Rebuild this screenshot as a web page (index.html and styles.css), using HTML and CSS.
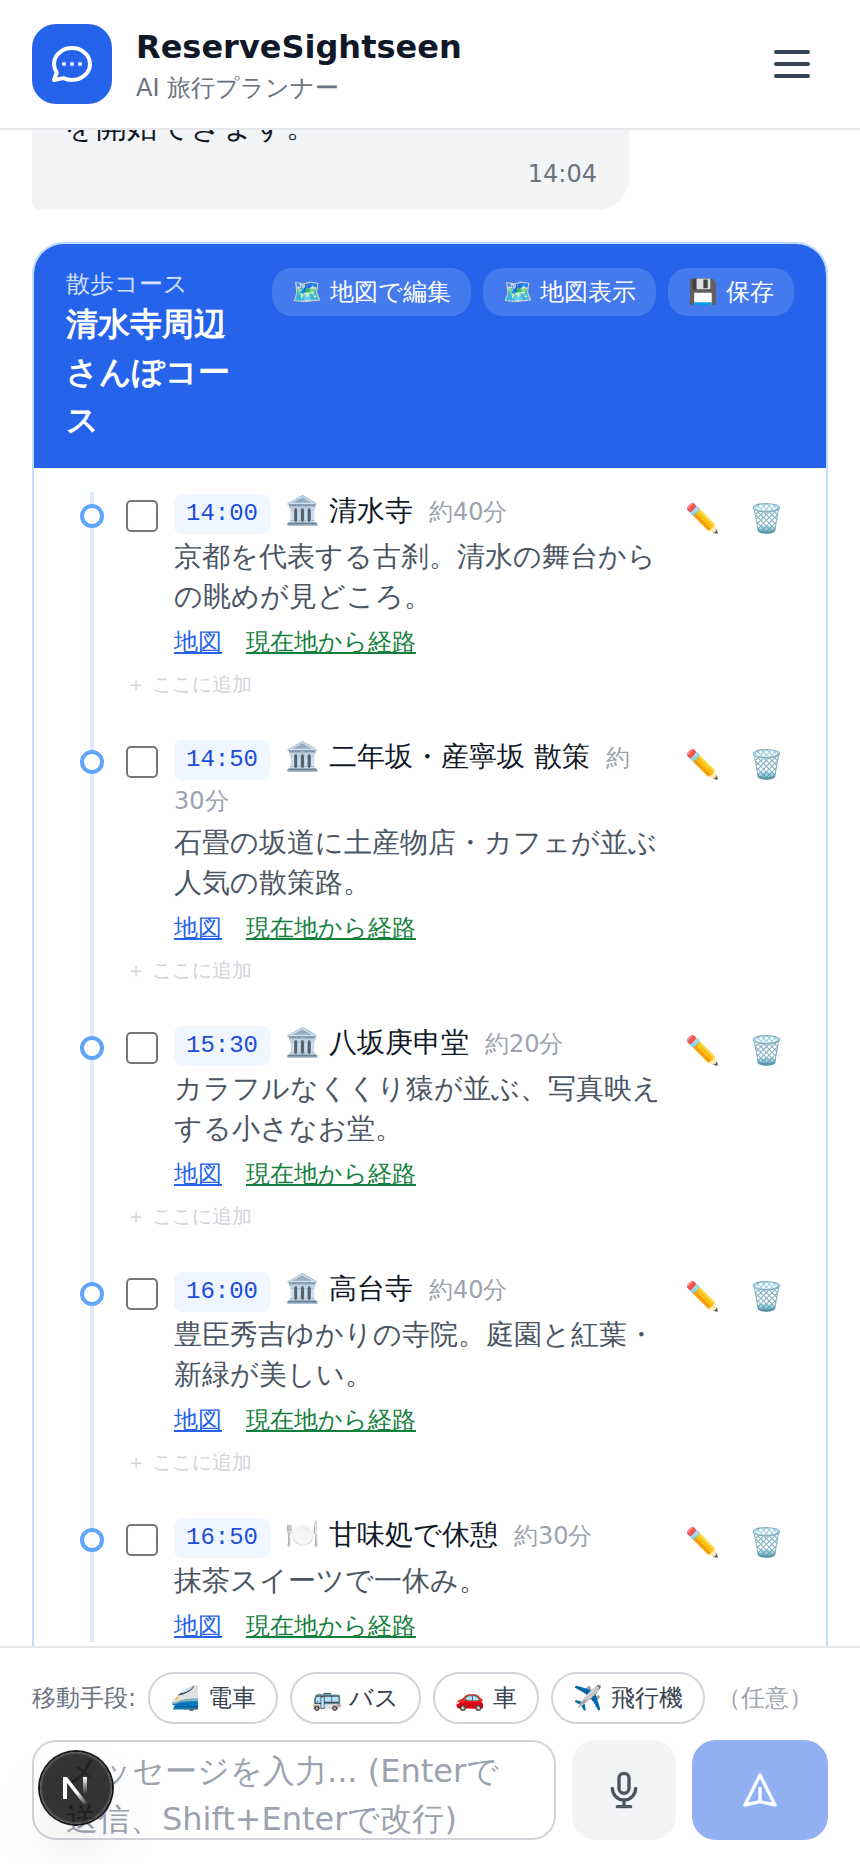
FILE: index.html
```html
<!DOCTYPE html>
<html lang="ja">
<head>
<meta charset="utf-8">
<meta name="viewport" content="width=device-width, initial-scale=1">
<title>ReserveSightseen</title>
<link rel="stylesheet" href="styles.css">
</head>
<body>
<div class="app">
  <header class="topbar">
    <div class="logo">
      <svg width="48" height="48" viewBox="0 0 24 24" fill="none" stroke="currentColor" stroke-width="2" stroke-linecap="round" stroke-linejoin="round" aria-hidden="true"><path d="M8 12h.01M12 12h.01M16 12h.01M21 12c0 4.418-4.03 8-9 8a9.863 9.863 0 01-4.255-.949L3 20l1.395-3.72C3.512 15.042 3 13.574 3 12c0-4.418 4.03-8 9-8s9 3.582 9 8z"/></svg>
    </div>
    <div class="brand">
      <h1 class="brand-name">ReserveSightseen</h1>
      <p class="brand-sub">AI 旅行プランナー</p>
    </div>
    <button class="menu" type="button" aria-label="メニュー">
      <svg width="48" height="48" viewBox="0 0 24 24" fill="none" stroke="currentColor" stroke-width="2" stroke-linecap="round" aria-hidden="true"><path d="M4 6h16M4 12h16M4 18h16"/></svg>
    </button>
  </header>

  <main class="chat">
    <div class="message">
      <p class="message-text">を開始できます。</p>
      <time class="message-time">14:04</time>
    </div>

    <section class="course">
      <header class="course-head">
        <div class="course-title">
          <p class="course-kind">散歩コース</p>
          <h2 class="course-name">清水寺周辺さんぽコース</h2>
        </div>
        <div class="course-actions">
          <button class="action" type="button">🗺️ 地図で編集</button>
          <button class="action" type="button">🗺️ 地図表示</button>
          <button class="action" type="button">💾 保存</button>
        </div>
      </header>
      <ol class="timeline">
        <li class="stop">
          <div class="stop-row">
            <input class="check" type="checkbox" aria-label="清水寺">
            <div class="stop-body">
              <div class="stop-head"><time class="clock">14:00</time><span class="place">🏛️ 清水寺</span><span class="length">約<span class="minutes">40分</span></span></div>
              <p class="desc">京都を代表する古刹。清水の舞台からの眺めが見どころ。</p>
              <div class="links"><a class="link-map" href="#">地図</a><a class="link-route" href="#">現在地から経路</a></div>
            </div>
            <div class="tools"><button class="tool" type="button" aria-label="編集">✏️</button><button class="tool" type="button" aria-label="削除">🗑️</button></div>
          </div>
          <button class="add" type="button">＋ ここに追加</button>
        </li>
        <li class="stop">
          <div class="stop-row">
            <input class="check" type="checkbox" aria-label="二年坂・産寧坂 散策">
            <div class="stop-body">
              <div class="stop-head"><time class="clock">14:50</time><span class="place">🏛️ 二年坂・産寧坂 散策</span><span class="length">約<span class="minutes">30分</span></span></div>
              <p class="desc">石畳の坂道に土産物店・カフェが並ぶ人気の散策路。</p>
              <div class="links"><a class="link-map" href="#">地図</a><a class="link-route" href="#">現在地から経路</a></div>
            </div>
            <div class="tools"><button class="tool" type="button" aria-label="編集">✏️</button><button class="tool" type="button" aria-label="削除">🗑️</button></div>
          </div>
          <button class="add" type="button">＋ ここに追加</button>
        </li>
        <li class="stop">
          <div class="stop-row">
            <input class="check" type="checkbox" aria-label="八坂庚申堂">
            <div class="stop-body">
              <div class="stop-head"><time class="clock">15:30</time><span class="place">🏛️ 八坂庚申堂</span><span class="length">約<span class="minutes">20分</span></span></div>
              <p class="desc">カラフルなくくり猿が並ぶ、写真映えする小さなお堂。</p>
              <div class="links"><a class="link-map" href="#">地図</a><a class="link-route" href="#">現在地から経路</a></div>
            </div>
            <div class="tools"><button class="tool" type="button" aria-label="編集">✏️</button><button class="tool" type="button" aria-label="削除">🗑️</button></div>
          </div>
          <button class="add" type="button">＋ ここに追加</button>
        </li>
        <li class="stop">
          <div class="stop-row">
            <input class="check" type="checkbox" aria-label="高台寺">
            <div class="stop-body">
              <div class="stop-head"><time class="clock">16:00</time><span class="place">🏛️ 高台寺</span><span class="length">約<span class="minutes">40分</span></span></div>
              <p class="desc">豊臣秀吉ゆかりの寺院。庭園と紅葉・新緑が美しい。</p>
              <div class="links"><a class="link-map" href="#">地図</a><a class="link-route" href="#">現在地から経路</a></div>
            </div>
            <div class="tools"><button class="tool" type="button" aria-label="編集">✏️</button><button class="tool" type="button" aria-label="削除">🗑️</button></div>
          </div>
          <button class="add" type="button">＋ ここに追加</button>
        </li>
        <li class="stop">
          <div class="stop-row">
            <input class="check" type="checkbox" aria-label="甘味処で休憩">
            <div class="stop-body">
              <div class="stop-head"><time class="clock">16:50</time><span class="place">🍽️ 甘味処で休憩</span><span class="length">約<span class="minutes">30分</span></span></div>
              <p class="desc">抹茶スイーツで一休み。</p>
              <div class="links"><a class="link-map" href="#">地図</a><a class="link-route" href="#">現在地から経路</a></div>
            </div>
            <div class="tools"><button class="tool" type="button" aria-label="編集">✏️</button><button class="tool" type="button" aria-label="削除">🗑️</button></div>
          </div>
        </li>
      </ol>
    </section>
  </main>

  <footer class="composer">
    <div class="transport">
      <span class="transport-label">移動手段:</span>
      <button class="chip" type="button">🚄 電車</button>
      <button class="chip" type="button">🚌 バス</button>
      <button class="chip" type="button">🚗 車</button>
      <button class="chip" type="button">✈️ 飛行機</button>
      <span class="optional">（任意）</span>
    </div>
    <form class="entry">
      <textarea class="entry-text" aria-label="メッセージ" placeholder="メッセージを入力... (Enterで送信、Shift+Enterで改行)"></textarea>
      <button class="mic" type="button" aria-label="音声入力">
        <svg width="40" height="40" viewBox="0 0 24 24" fill="none" stroke="currentColor" stroke-width="2" stroke-linecap="round" stroke-linejoin="round" aria-hidden="true"><path d="M19 11a7 7 0 01-7 7m0 0a7 7 0 01-7-7m7 7v4m0 0H8m4 0h4m-4-8a3 3 0 01-3-3V5a3 3 0 116 0v6a3 3 0 01-3 3z"/></svg>
      </button>
      <button class="send" type="submit" aria-label="送信" disabled>
        <svg width="40" height="40" viewBox="0 0 24 24" fill="none" stroke="currentColor" stroke-width="2" stroke-linecap="round" stroke-linejoin="round" aria-hidden="true"><path d="M12 19l9 2-9-18-9 18 9-2zm0 0v-8"/></svg>
      </button>
    </form>
  </footer>

  <button class="devtools" type="button" aria-label="Next.js Dev Tools">
    <svg width="72" height="72" viewBox="0 0 72 72" fill="none" aria-hidden="true">
      <defs>
        <linearGradient id="n-diag" x1="37" y1="40" x2="47" y2="53" gradientUnits="userSpaceOnUse"><stop stop-color="#fff"/><stop offset="1" stop-color="#fff" stop-opacity="0"/></linearGradient>
        <linearGradient id="n-stem" x1="45" y1="25" x2="45" y2="42" gradientUnits="userSpaceOnUse"><stop stop-color="#fff"/><stop offset="1" stop-color="#fff" stop-opacity="0"/></linearGradient>
      </defs>
      <path d="M23 25h4l21 27-3 2-18-23v16h-4z" fill="url(#n-diag)"/>
      <path d="M43 25h4v17h-4z" fill="url(#n-stem)"/>
    </svg>
  </button>
</div>
</body>
</html>
```
FILE: styles.css
```css
* { box-sizing: border-box; margin: 0; padding: 0; }
body { background: #fff; color: #111827; font-family: "DejaVu Sans", sans-serif; font-size: 32px; line-height: 48px; }
button, input, textarea { font: inherit; color: inherit; }
button { border: 0; background: none; cursor: pointer; }
svg { display: block; }

.app { display: flex; flex-direction: column; height: 100vh; overflow: hidden; }

.topbar { display: flex; align-items: center; gap: 24px; flex: none; padding: 24px 32px; border-bottom: 2px solid #e5e7eb; background: #fff; }
.logo { display: grid; place-items: center; width: 80px; height: 80px; border-radius: 24px; background: #2563eb; color: #fff; }
.brand { flex: 1; }
.brand-name { padding-bottom: 2px; font-size: 32px; line-height: 46px; font-weight: 700; }
.brand-sub { font-size: 24px; line-height: 32px; color: #6b7280; }
.menu { padding: 12px; color: #374151; }

.chat { display: flex; flex-direction: column; justify-content: flex-start; flex: 1; min-height: 0; overflow: hidden; padding: 0 32px; }
.message { flex: none; width: 75%; margin-top: -48px; padding: 20px 32px; border-radius: 32px 32px 32px 8px; background: #f3f4f6; }
.message-text { font-size: 31px; line-height: 48px; }
.message-time { display: block; margin-top: 8px; text-align: right; font-size: 24px; line-height: 32px; color: #6b7280; }

.course { flex: none; margin-top: 32px; border: 2px solid #bfdbfe; border-radius: 32px; overflow: hidden; }
.course-head { display: flex; align-items: flex-start; gap: 24px; padding: 24px 32px; background: #2563eb; color: #fff; }
.course-title { flex: 1; }
.course-kind { font-size: 24px; line-height: 32px; opacity: .8; }
.course-name { font-size: 32px; line-height: 48px; font-weight: 700; }
.course-actions { display: flex; flex: none; gap: 12px; }
.action { padding: 8px 20px; border-radius: 20px; background: rgba(255, 255, 255, .15); font-size: 24px; line-height: 32px; white-space: nowrap; }

.timeline { margin: 24px 28px 64px 56px; border-left: 4px solid #dbeafe; list-style: none; }
.stop { position: relative; padding-left: 32px; }
.stop::before { content: ""; position: absolute; left: -14px; top: 12px; box-sizing: border-box; width: 24px; height: 24px; border: 4px solid #60a5fa; border-radius: 50%; background: #fff; }
.stop-row { display: flex; align-items: flex-start; gap: 16px; }
.check { appearance: none; flex: none; width: 32px; height: 32px; margin-top: 8px; border: 2px solid #767676; border-radius: 5px; background: #fff; }
.stop-body { flex: 1; min-width: 0; margin-top: -1px; font-size: 28px; line-height: 40px; }
.stop-head { padding-bottom: 3px; }
.clock { display: inline-block; margin-right: 15px; padding: 4px 12px; border-radius: 8px; background: #eff6ff; color: #1d4ed8; font-family: "Liberation Mono", monospace; font-size: 24px; line-height: 32px; }
.length { margin-left: 16px; font-size: 24px; line-height: 32px; color: #9ca3af; }
.minutes { white-space: nowrap; }
.desc { color: #4b5563; }
.links { display: flex; gap: 24px; margin-top: 9px; font-size: 24px; line-height: 32px; }
.link-map { color: #2563eb; }
.link-route { color: #15803d; }
.tools { display: flex; flex: none; margin-left: -8px; }
.tool { width: 64px; padding: 7px 0; font-size: 28px; line-height: 40px; }
.add { display: block; margin: 6px 0 34px; padding: 4px 0; color: #d1d5db; font-size: 20px; line-height: 32px; }

.composer { flex: none; padding: 24px 32px; border-top: 2px solid #e5e7eb; background: #fff; }
.transport { display: flex; align-items: center; gap: 12px; font-size: 24px; line-height: 32px; white-space: nowrap; }
.transport-label { color: #6b7280; }
.optional { color: #9ca3af; }
.chip { padding: 8px 20px; border: 2px solid #d1d5db; border-radius: 26px; background: #fff; color: #374151; }
.entry { display: flex; gap: 16px; margin-top: 16px; }
.entry-text { flex: 1; min-width: 0; height: 100px; padding: 5px 32px 0; border: 2px solid #d1d5db; border-radius: 24px; resize: none; overflow: hidden; font-size: 32px; line-height: 48px; }
.entry-text::placeholder { color: #9ca3af; }
.mic, .send { display: grid; place-items: center; flex: none; border-radius: 24px; }
.mic { width: 104px; background: #f3f4f6; color: #4b5563; }
.send { width: 136px; background: #2563eb; color: #fff; opacity: .5; }

.devtools { position: fixed; left: 40px; bottom: 40px; display: grid; place-items: center; width: 72px; height: 72px; border-radius: 50%; background: rgba(0, 0, 0, .8); box-shadow: 0 0 0 2px #171717, inset 0 0 0 2px rgba(255, 255, 255, .14), 0 32px 64px -16px rgba(0, 0, 0, .24); }
```
